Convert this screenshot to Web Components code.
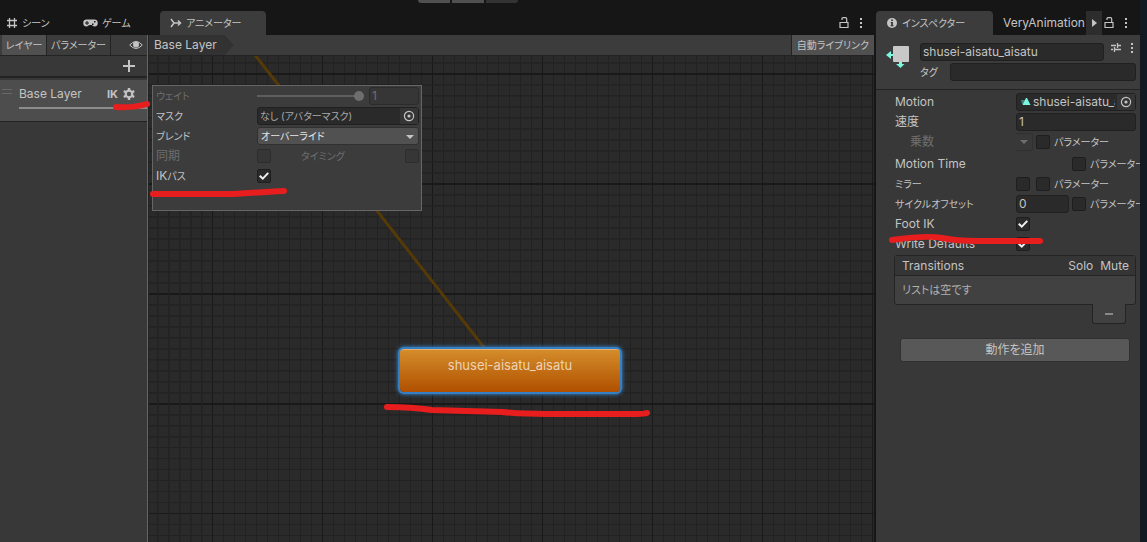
<!DOCTYPE html>
<html lang="ja">
<head>
<meta charset="utf-8">
<title>Animator</title>
<style>
  body {
    margin: 0;
    background: #383838;
    color: #c4c4c4;
    font: 12px/20px Inter, "Noto Sans CJK JP", sans-serif;
    font-feature-settings: "palt";
  }
</style>
</head>
<body>
<editor-window></editor-window>

<script>
const ICONS = {
  grid: '<path d="M3.5 1v10M8.5 1v10M1 3.5h10M1 8.5h10" stroke="currentColor" stroke-width="1.3" fill="none"/>',
  pad: '<path fill="currentColor" fill-rule="evenodd" d="M4 2.500h7A3.500 3.500 0 0 1 11.500 9.500C10 9.500 9.500 8 8.500 8h-2C5.500 8 5 9.500 3.500 9.500A3.500 3.500 0 0 1 4 2.500zM3.500 4v1.500H2v1h1.500V8h1V6.500H6v-1H4.500V4zM9 6.500h1.500V8H9zM11 4h1.500v1.500H11z"/>',
  anim: '<path d="M1 2l3 4-3 4M4 6h6M8 3.500l2.500 2.500L8 8.500" stroke="currentColor" stroke-width="1.500" fill="none"/>',
  info: '<circle cx="6" cy="6" r="5" fill="currentColor"/><path fill="#333" d="M5.200 2.500h1.700v1.500H5.200zM4.700 5h2.200v3.200h.7v1H4.500v-1h.7V6h-.5z"/>',
  lock: '<path d="M2 5.500h8v5H2zM4 3V1.500Q4 .700 5 .700h2.500Q8.700 .700 8.700 2v3.500" stroke="currentColor" stroke-width="1.200" fill="none"/>',
  dots: '<path fill="currentColor" d="M5 1h2v2H5zM5 5h2v2H5zM5 9h2v2H5z"/>',
  eye: '<path d="M.7 6Q7 -1 13.300 6Q7 13 .7 6z" stroke="currentColor" fill="none"/><circle cx="7" cy="5.500" r="3" fill="currentColor"/>',
  plus: '<path d="M6 0v12M0 6h12" stroke="currentColor" stroke-width="2"/>',
  gear: '<circle cx="6" cy="6" r="3.300" stroke="currentColor" stroke-width="2.200" fill="none"/><path d="M6 0v2.500M6 9.500V12M.8 3l2.200 1.200M9 7.800L11.200 9M.8 9L3 7.800M9 4.200L11.200 3" stroke="currentColor" stroke-width="2.400"/>',
  preset: '<path d="M1 3.500h5M8 3.500h3M1 7.500h2M5 7.500h6M7.500 1v5M4.500 5v5" stroke="currentColor" stroke-width="1.300"/>',
  right: '<path fill="currentColor" d="M4 2l5 4-5 4z"/>',
  down: '<path fill="currentColor" d="M2 4h8L6 8z"/>',
  picker: '<circle cx="6" cy="6" r="4.600" stroke="currentColor" fill="none" stroke-width="1.200"/><circle cx="6" cy="6" r="1.600" fill="currentColor"/>',
  clip: '<path fill="#3f7f78" d="M2 4h4v4H3z"/><path fill="#7df5df" d="M7 2h1l3.500 7H3.500z"/>',
  state: '<path fill="#7df5df" d="M0 11l5-4v3h4v2H5v3zM13 15h3v5h2.500L14.500 24 10 20h3z"/><rect x="7" y="2" width="16" height="16" rx="1" fill="#c8c8c8"/>',
  minus: '<path d="M2 6h8" stroke="currentColor" stroke-width="2"/>'
};

const controls = `
  * { box-sizing: border-box; }
  button, input, select {
    font: inherit;
    font-feature-settings: inherit;
    color: inherit;
    margin: 0;
  }
  button {
    display: flex;
    align-items: center;
    justify-content: center;
    padding: 0;
    border: 0;
    background: none;
    white-space: nowrap;
  }
  label { white-space: nowrap; }
  .kana { font-size: 10px; }
  input:not([type]), .object {
    min-width: 0;
    height: 18px;
    padding: 0 2px;
    border: 1px solid #202020;
    border-radius: 3px;
    background: #2a2a2a;
  }
  input[type=checkbox] {
    appearance: none;
    flex: none;
    position: relative;
    width: 14px;
    height: 14px;
    border: 1px solid #1e1e1e;
    border-radius: 2px;
    background: #2a2a2a;
  }
  input[type=checkbox]:checked::after {
    content: "";
    position: absolute;
    inset: 1px;
    background: #eee;
    clip-path: polygon(0 55%, 15% 40%, 38% 62%, 85% 12%, 100% 26%, 38% 90%);
  }
  .off { color: #6e6e6e; }
  .off input[type=checkbox], input[type=checkbox]:disabled {
    background: #363636;
    border-color: #2d2d2d;
  }
  .object { display: flex; align-items: center; padding-right: 0; }
  .object span { flex: 1; overflow: hidden; white-space: nowrap; }
  .object button { width: 18px; height: 16px; background: #353535; }
`;

const markStyle = `
  .mark {
    position: absolute;
    overflow: visible;
    pointer-events: none;
    fill: none;
    stroke: #e81e1e;
    stroke-width: 6;
    stroke-linecap: round;
    stroke-linejoin: round;
    z-index: 2;
  }
`;

class UiIcon extends HTMLElement {
  constructor() {
    super();
    this.attachShadow({ mode: "open" });
  }

  connectedCallback() {
    const w = this.getAttribute("w") || 12;
    const h = this.getAttribute("h") || 12;
    this.shadowRoot.innerHTML = `
      <style>
        :host { display: inline-flex; flex: none; }
        svg { display: block; }
      </style>
      <svg width="${w}" height="${h}" viewBox="0 0 ${w} ${h}" aria-hidden="true">${ICONS[this.getAttribute("name")]}</svg>
    `;
  }
}
customElements.define("ui-icon", UiIcon);

class DockTab extends HTMLElement {
  constructor() {
    super();
    this.attachShadow({ mode: "open" });
  }

  connectedCallback() {
    this.shadowRoot.innerHTML = `
      <style>
        ${controls}
        :host { display: block; height: 24px; }
        button { height: 24px; gap: 4px; padding: 0 10px; }
        :host([active]) button {
          width: 100%;
          justify-content: flex-start;
          border-radius: 4px 4px 0 0;
          background: #3c3c3c;
        }
      </style>
      <button type="button"><slot name="icon"></slot><slot></slot></button>
    `;
  }
}
customElements.define("dock-tab", DockTab);

class LayerPanel extends HTMLElement {
  constructor() {
    super();
    this.attachShadow({ mode: "open" });
  }

  connectedCallback() {
    this.shadowRoot.innerHTML = `
      <style>
        ${controls}
        ${markStyle}
        :host {
          display: block;
          position: relative;
          border-right: 1px solid #666;
          background: #383838;
        }
        .bar {
          display: flex;
          height: 21px;
          padding-left: 2px;
          border-bottom: 1px solid #232323;
          background: #3c3c3c;
        }
        .bar button { height: 20px; padding: 0 4px; border-right: 1px solid #232323; }
        .bar button.on { width: 45px; background: #505050; }
        .bar .eye { margin-left: auto; border: 0; }
        .add {
          display: flex;
          justify-content: flex-end;
          height: 22px;
          padding-right: 12px;
          border-bottom: 2px solid #232323;
        }
        .layer {
          margin-top: 2px;
          height: 42px;
          padding-top: 4px;
          border-bottom: 1px solid #232323;
          background: #4d4d4d;
        }
        .name { display: flex; align-items: center; padding: 0 12px 0 2px; }
        .grip {
          width: 10px;
          height: 5px;
          margin: 0 7px 6px 0;
          border: solid #686868;
          border-width: 1px 0;
        }
        .ik { margin-left: auto; margin-right: 5px; font-weight: bold; font-size: 11px; }
        .weight { height: 2px; margin: 3px 0 0 19px; background: #8c8c8c; }
        .mark { left: 116px; top: 66px; }
      </style>
      <div class="bar">
        <button type="button" class="on kana">レイヤー</button>
        <button type="button" class="kana">パラメーター</button>
        <button type="button" class="eye" aria-label="eye"><ui-icon name="eye" w="14"></ui-icon></button>
      </div>
      <div class="add"><button type="button" aria-label="add"><ui-icon name="plus"></ui-icon></button></div>
      <div class="layer">
        <div class="name">
          <i class="grip"></i><span>Base Layer</span><span class="ik">IK</span>
          <button type="button" aria-label="settings"><ui-icon name="gear"></ui-icon></button>
        </div>
        <div class="weight"></div>
      </div>
      <svg class="mark" width="34" height="8"><path d="M0 6Q18 7 31 3"/></svg>
    `;
  }
}
customElements.define("layer-panel", LayerPanel);

class LayerSettings extends HTMLElement {
  constructor() {
    super();
    this.attachShadow({ mode: "open" });
  }

  connectedCallback() {
    this.shadowRoot.innerHTML = `
      <style>
        ${controls}
        ${markStyle}
        :host {
          display: block;
          box-sizing: border-box;
          padding: 0 2px 24px 3px;
          border: 1px solid #666;
          background: #3c3c3c;
        }
        .row {
          display: grid;
          grid-template-columns: 101px minmax(0, 1fr);
          align-items: center;
          height: 20px;
        }
        .value { display: flex; align-items: center; gap: 5px; }
        .value input:not([type]) { flex: none; width: 50px; background: #363636; border-color: #2b2b2b; }
        input[type=range] {
          appearance: none;
          flex: 1;
          min-width: 0;
          height: 10px;
          background: linear-gradient(#5e5e5e, #5e5e5e) center / 100% 2px no-repeat;
        }
        input[type=range]::-webkit-slider-thumb {
          appearance: none;
          width: 10px;
          height: 10px;
          border-radius: 5px;
          background: #6e6e6e;
        }
        .object { color: #a8a8a8; }
        .object button { color: #c4c4c4; }
        .pick { position: relative; }
        .pick ui-icon { position: absolute; right: 3px; top: 4px; pointer-events: none; }
        select {
          appearance: none;
          display: block;
          width: 100%;
          height: 18px;
          padding: 0 3px;
          border: 1px solid #303030;
          border-radius: 3px;
          background: #515151;
          line-height: 16px;
          color: #e4e4e4;
        }
        .timing { margin-left: 25px; flex: 1; }
        .mark { left: 0; top: 102px; }
      </style>
      <div class="row off">
        <label for="weight" class="kana">ウェイト</label>
        <div class="value">
          <input type="range" id="weight" min="0" max="1" value="1" disabled>
          <input value="1" aria-label="weight value" disabled>
        </div>
      </div>
      <div class="row">
        <label for="mask" class="kana">マスク</label>
        <div class="object"><span class="kana">なし (アバターマスク)</span><button type="button" id="mask"><ui-icon name="picker"></ui-icon></button></div>
      </div>
      <div class="row">
        <label for="blend" class="kana">ブレンド</label>
        <div class="pick"><select id="blend" class="kana"><option>オーバーライド</option></select><ui-icon name="down"></ui-icon></div>
      </div>
      <div class="row off">
        <label for="sync">同期</label>
        <div class="value">
          <input type="checkbox" id="sync" disabled>
          <label for="timing" class="timing kana">タイミング</label>
          <input type="checkbox" id="timing" disabled>
        </div>
      </div>
      <div class="row">
        <label for="ik">IK<span class="kana">パス</span></label>
        <input type="checkbox" id="ik" checked>
      </div>
      <svg class="mark" width="134" height="8"><path d="M0 6H80Q110 4 131 3"/></svg>
    `;
  }
}
customElements.define("layer-settings", LayerSettings);

class StateNode extends HTMLElement {
  constructor() {
    super();
    this.attachShadow({ mode: "open" });
  }

  connectedCallback() {
    this.shadowRoot.innerHTML = `
      <style>
        ${controls}
        ${markStyle}
        :host { display: block; }
        button {
          width: 220px;
          height: 43px;
          padding-bottom: 12px;
          border-top: 1px solid #e7b273;
          border-radius: 4px;
          background: linear-gradient(#d48c2a, #b05000);
          box-shadow: 0 0 0 2px #3580c4, 0 0 4px 2px #3b93e4;
          font-size: 13px;
          color: #ecd3b4;
        }
        .mark { left: -13px; top: 58px; }
      </style>
      <button type="button"><slot></slot></button>
      <svg class="mark" width="262" height="12"><path d="M0 0Q25 0 45 3L115 5Q135 7 160 7H250Q257 7 260 6"/></svg>
    `;
  }
}
customElements.define("state-node", StateNode);

class AnimatorGraph extends HTMLElement {
  constructor() {
    super();
    this.attachShadow({ mode: "open" });
  }

  connectedCallback() {
    this.shadowRoot.innerHTML = `
      <style>
        ${controls}
        :host { display: flex; flex-direction: column; min-width: 0; border-left: 1px solid #232323; }
        .bar {
          display: flex;
          justify-content: space-between;
          height: 21px;
          border-bottom: 1px solid #232323;
          background: #3c3c3c;
        }
        .crumb {
          padding: 0 17px 0 5px;
          background: #323232;
          clip-path: polygon(0 0, calc(100% - 9px) 0, 100% 50%, calc(100% - 9px) 100%, 0 100%);
        }
        .live { padding: 0 5px; border-left: 1px solid #232323; background: #505050; }
        .canvas {
          flex: 1;
          position: relative;
          overflow: hidden;
          background:
            linear-gradient(90deg, #191919 1px, transparent 1px) 63px 0 / 110px 110px,
            linear-gradient(#191919 1px, transparent 1px) 0 17px / 110px 110px,
            linear-gradient(90deg, #222 1px, transparent 1px) 8px 0 / 11px 11px,
            linear-gradient(#222 1px, transparent 1px) 0 6px / 11px 11px,
            #2a2a2a;
        }
        /* lines get heavier towards the top and left edges */
        .canvas::before, .canvas::after {
          content: "";
          position: absolute;
          left: 0;
          top: 0;
        }
        .canvas::before {
          width: 100%;
          height: 384px;
          background:
            linear-gradient(#191919 2px, transparent 2px) 0 17px / 110px 110px,
            linear-gradient(#2229 2px, transparent 2px) 0 6px / 11px 11px;
        }
        .canvas::after {
          width: 55px;
          height: 100%;
          background: linear-gradient(90deg, #2229 2px, transparent 2px) 8px 0 / 11px 11px;
        }
        .edge { position: absolute; left: 0; top: 0; overflow: visible; z-index: 1; }
        layer-settings { position: absolute; left: 3px; top: 29px; width: 270px; z-index: 2; }
        state-node { position: absolute; left: 251px; top: 293px; z-index: 2; }
      </style>
      <div class="bar">
        <button type="button" class="crumb">Base Layer</button>
        <button type="button" class="live kana">自動ライブリンク</button>
      </div>
      <div class="canvas">
        <svg class="edge" width="340" height="300"><path d="M106 -1L337 294" stroke="#553a08" stroke-width="3"/></svg>
        <state-node>shusei-aisatu_aisatu</state-node>
        <layer-settings></layer-settings>
      </div>
    `;
  }
}
customElements.define("animator-graph", AnimatorGraph);

class InspectorPanel extends HTMLElement {
  constructor() {
    super();
    this.attachShadow({ mode: "open" });
  }

  connectedCallback() {
    this.shadowRoot.innerHTML = `
      <style>
        ${controls}
        ${markStyle}
        :host { display: block; position: relative; overflow: hidden; background: #383838; }
        header {
          display: grid;
          grid-template-columns: 24px minmax(0, 1fr);
          gap: 10px;
          height: 55px;
          padding: 7px 4px 0 10px;
          border-bottom: 1px solid #232323;
          background: #3c3c3c;
        }
        header > ui-icon { margin-top: 2px; }
        .line { display: flex; align-items: center; height: 20px; }
        .line input { flex: 1; }
        .line button { align-self: flex-start; margin-left: 6px; }
        .line button + button { margin-left: 4px; margin-right: -2px; }
        .line label { width: 30px; }
        .props { padding: 2px 0 0 19px; }
        .row {
          display: grid;
          grid-template-columns: 121px minmax(0, 1fr);
          align-items: center;
          height: 20px;
        }
        .row.gap { margin-top: 2px; }
        .row.sub > :first-child { padding-left: 15px; }
        .value { display: flex; align-items: center; gap: 3px; min-width: 0; }
        .value.wide { padding-right: 4px; }
        .wide > * { flex: 1; min-width: 0; }
        .wide .object { gap: 2px; }
        .value label { margin-left: 1px; }
        .empty { width: 53px; height: 18px; flex: none; }
        .value input.short { width: 53px; flex: none; }
        .value.pair { gap: 6px; }
        .pair label { margin-left: -2px; }
        .param {
          width: 17px;
          height: 18px;
          border: 1px solid #303030;
          border-left: 0;
          border-radius: 0 3px 3px 0;
        }
        .list { margin: 1px 4px 0 18px; }
        table {
          width: 100%;
          border: 1px solid #242424;
          border-radius: 3px;
          border-spacing: 0;
          background: #414141;
        }
        th {
          height: 20px;
          padding: 0 6px 0 0;
          border-bottom: 1px solid #242424;
          background: #353535;
          font-weight: normal;
          line-height: 18px;
          text-align: right;
        }
        th:first-child { width: 100%; padding-left: 7px; text-align: left; }
        th:nth-child(2) { padding-right: 7px; }
        td { height: 28px; padding: 0 7px; font-size: 11px; color: #b0b0b0; }
        .minus {
          width: 34px;
          height: 20px;
          margin: -1px 10px 0 auto;
          border: 1px solid #242424;
          border-top: 0;
          border-radius: 0 0 3px 3px;
          background: #414141;
          color: #888;
        }
        .action { padding: 14px 10px 0 24px; }
        .action button {
          width: 100%;
          height: 24px;
          border: 1px solid #303030;
          border-radius: 3px;
          background: #585858;
        }
        .mark { left: 16px; top: 202px; }
      </style>
      <header>
        <ui-icon name="state" w="24" h="24"></ui-icon>
        <div>
          <div class="line">
            <input value="shusei-aisatu_aisatu" aria-label="name">
            <button type="button" aria-label="preset"><ui-icon name="preset"></ui-icon></button>
            <button type="button" aria-label="menu"><ui-icon name="dots"></ui-icon></button>
          </div>
          <div class="line"><label for="tag" class="kana">タグ</label><input id="tag"></div>
        </div>
      </header>
      <div class="props">
        <div class="row">
          <label for="motion">Motion</label>
          <div class="value wide"><div class="object"><ui-icon name="clip"></ui-icon><span>shusei-aisatu_aisatu</span><button type="button" id="motion"><ui-icon name="picker"></ui-icon></button></div></div>
        </div>
        <div class="row">
          <label for="speed">速度</label>
          <div class="value wide"><input id="speed" value="1"></div>
        </div>
        <div class="row sub">
          <label class="off" for="multiplier">乗数</label>
          <div class="value">
            <button type="button" class="param off" id="multiplier"><ui-icon name="down"></ui-icon></button>
            <input type="checkbox" id="p1"><label for="p1" class="kana">パラメーター</label>
          </div>
        </div>
        <div class="row gap">
          <span>Motion Time</span>
          <div class="value"><span class="empty"></span><input type="checkbox" id="p2"><label for="p2" class="kana">パラメーター</label></div>
        </div>
        <div class="row">
          <label for="mirror" class="kana">ミラー</label>
          <div class="value pair"><input type="checkbox" id="mirror"><input type="checkbox" id="p3"><label for="p3" class="kana">パラメーター</label></div>
        </div>
        <div class="row">
          <label for="cycle" class="kana">サイクルオフセット</label>
          <div class="value"><input class="short" id="cycle" value="0"><input type="checkbox" id="p4"><label for="p4" class="kana">パラメーター</label></div>
        </div>
        <div class="row">
          <label for="foot">Foot IK</label>
          <input type="checkbox" id="foot" checked>
        </div>
        <div class="row">
          <label for="defaults">Write Defaults</label>
          <input type="checkbox" id="defaults" checked>
        </div>
      </div>
      <div class="list">
        <table>
          <tr><th>Transitions</th><th>Solo</th><th>Mute</th></tr>
          <tr><td colspan="3">リストは空です</td></tr>
        </table>
        <button type="button" class="minus" aria-label="remove"><ui-icon name="minus"></ui-icon></button>
      </div>
      <div class="action"><button type="button">動作を追加</button></div>
      <svg class="mark" width="150" height="8"><path d="M0 3Q35 -2 50 1Q65 4 85 4H148"/></svg>
    `;
  }
}
customElements.define("inspector-panel", InspectorPanel);

class EditorWindow extends HTMLElement {
  constructor() {
    super();
    this.attachShadow({ mode: "open" });
  }

  connectedCallback() {
    this.shadowRoot.innerHTML = `
      <style>
        ${controls}
        :host {
          display: grid;
          grid-template-columns: minmax(0, 1fr) 264px;
          column-gap: 2px;
          min-height: 100vh;
          box-sizing: border-box;
          border-right: 7px solid #111a22;
          background: #161616;
        }
        .dock { display: flex; flex-direction: column; min-width: 0; }
        .tabs { display: flex; align-items: center; height: 35px; padding-top: 11px; }
        .scene { width: 77px; margin-left: -4px; }
        .game { width: 87px; }
        .animator { width: 106px; }
        .inspector { width: 117px; }
        .very { width: 93px; overflow: hidden; }
        .tools { display: flex; align-items: center; gap: 5px; margin-left: auto; padding-right: 7px; }
        .tools.side { gap: 0; padding-right: 8px; }
        .side button { flex: none; }
        .next { width: 16px; height: 24px; background: #2d2d2d; }
        .lock { margin: 0 5px 0 1px; }
        .main { flex: 1; display: grid; grid-template-columns: 148px minmax(0, 1fr); }
        inspector-panel { flex: 1; }
        .play {
          position: absolute;
          left: 50%;
          top: 0;
          display: flex;
          gap: 2px;
          transform: translateX(-50%);
          margin-left: -106px;
        }
        .play button { width: 32px; height: 3px; background: #505050; }
        .play button:first-child { border-radius: 0 0 0 3px; }
        .play button:last-child { border-radius: 0 0 3px 0; background: #333; }
      </style>
      <div class="play">
        <button type="button" aria-label="play"></button>
        <button type="button" aria-label="pause"></button>
        <button type="button" aria-label="step"></button>
      </div>
      <div class="dock">
        <div class="tabs">
          <dock-tab class="scene kana"><ui-icon slot="icon" name="grid"></ui-icon>シーン</dock-tab>
          <dock-tab class="game kana"><ui-icon slot="icon" name="pad" w="15"></ui-icon>ゲーム</dock-tab>
          <dock-tab class="animator kana" active><ui-icon slot="icon" name="anim"></ui-icon>アニメーター</dock-tab>
          <div class="tools">
            <button type="button" aria-label="lock"><ui-icon name="lock"></ui-icon></button>
            <button type="button" aria-label="menu"><ui-icon name="dots"></ui-icon></button>
          </div>
        </div>
        <div class="main">
          <layer-panel></layer-panel>
          <animator-graph></animator-graph>
        </div>
      </div>
      <div class="dock">
        <div class="tabs">
          <dock-tab class="inspector kana" active><ui-icon slot="icon" name="info"></ui-icon>インスペクター</dock-tab>
          <dock-tab class="very">VeryAnimation</dock-tab>
          <div class="tools side">
            <button type="button" class="next" aria-label="next tab"><ui-icon name="right"></ui-icon></button>
            <button type="button" class="lock" aria-label="lock"><ui-icon name="lock"></ui-icon></button>
            <button type="button" aria-label="menu"><ui-icon name="dots"></ui-icon></button>
          </div>
        </div>
        <inspector-panel></inspector-panel>
      </div>
    `;
  }
}
customElements.define("editor-window", EditorWindow);
</script>
</body>
</html>
